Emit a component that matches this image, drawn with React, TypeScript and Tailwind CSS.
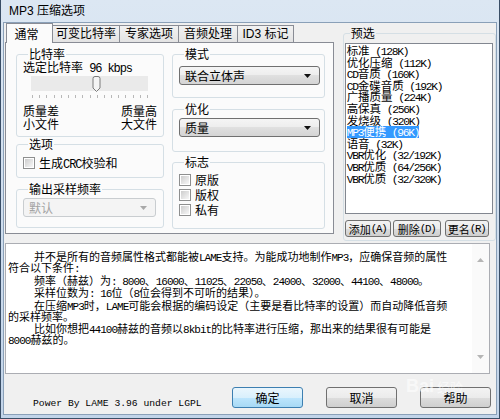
import type { ReactNode } from 'react';

const LATIN = /^[\x20-\x7e]+$/;

// SimSun-like mixing: CJK in Noto, latin runs in a narrow mono
function Mixed({ text, small = false }: { text: string; small?: boolean }) {
  const parts = text.split(/([\x20-\x7e]+)/).filter((p) => p !== '');
  return (
    <>
      {parts.map((p, i) =>
        LATIN.test(p) ? (
          <span
            key={i}
            className={
              small
                ? "whitespace-pre font-['Liberation_Mono',monospace] text-[0.98em] tracking-[-0.11em]"
                : "whitespace-pre font-['Liberation_Mono',monospace] text-[1em] tracking-[-0.09em]"
            }
          >
            {p}
          </span>
        ) : (
          <span key={i}>{p}</span>
        ),
      )}
    </>
  );
}

function Group({ title, className, children }: { title: string; className: string; children?: ReactNode }) {
  return (
    <fieldset className={`rounded-[3px] border border-[#d5dfe5] ${className}`}>
      <legend className="ml-[5px] px-[1px] text-[12px] leading-[12px]">{title}</legend>
      {children}
    </fieldset>
  );
}

function Combo({ text, disabled = false }: { text: string; disabled?: boolean }) {
  return (
    <div
      className={
        disabled
          ? 'flex h-[19px] items-center rounded-[3px] border border-[#c9cdd0] bg-[#f4f4f4] pl-[5px] pr-[8px] text-[#a3a3a3]'
          : 'flex h-[19px] items-center rounded-[3px] border border-[#707070] bg-[linear-gradient(to_bottom,#f5f5f5_0%,#ededed_50%,#e0e0e0_50%,#d4d4d4_100%)] pl-[5px] pr-[8px]'
      }
    >
      <span className="flex-1 text-[12px] leading-none">{text}</span>
      <svg width="7" height="4" viewBox="0 0 7 4">
        <path d="M0 0h7L3.5 4z" fill={disabled ? '#a8a8a8' : '#111'} />
      </svg>
    </div>
  );
}

function Check({ label }: { label: string }) {
  return (
    <div className="flex h-[15px] items-center gap-[4px]">
      <span className="h-[12px] w-[12px] border border-[#8e8f8f] bg-white p-[1px]">
        <span className="block h-full w-full bg-[linear-gradient(135deg,#cdcdcd,#f7f7f7)]" />
      </span>
      <span className="h-[13px] text-[12px] leading-[13px]">
        <Mixed text={label} />
      </span>
    </div>
  );
}

function Btn({ children, className }: { children: ReactNode; className: string }) {
  return (
    <div
      className={`flex items-center justify-center rounded-[3px] border border-[#707070] bg-[linear-gradient(to_bottom,#f3f3f3_0%,#ebebeb_50%,#dddddd_50%,#cfcfcf_100%)] ${className}`}
    >
      {children}
    </div>
  );
}

const presets = [
  '标准 (128K)',
  '优化压缩 (112K)',
  'CD音质 (160K)',
  'CD金碟音质 (192K)',
  '广播质量 (224K)',
  '高保真 (256K)',
  '发烧级 (320K)',
  'MP3便携 (96K)',
  '语音 (32K)',
  'VBR优化 (32/192K)',
  'VBR优质 (64/256K)',
  'VBR优质 (32/320K)',
];

const tabs = [
  { label: '可变比特率', w: 'w-[68px]' },
  { label: '专家选项', w: 'w-[60px]' },
  { label: '音频处理', w: 'w-[60px]' },
  { label: 'ID3 标记', w: 'w-[57px]' },
];

const notes: { first: string; rest?: string }[] = [
  { first: '并不是所有的音频属性格式都能被LAME支持。为能成功地制作MP3，应确保音频的属性', rest: '符合以下条件:' },
  { first: '频率（赫兹）为: 8000、16000、11025、22050、24000、32000、44100、48000。' },
  { first: '采样位数为: 16位（8位会得到不可听的结果）。' },
  { first: '在压缩MP3时，LAME可能会根据的编码设定（主要是看比特率的设置）而自动降低音频', rest: '的采样频率。' },
  { first: '比如你想把44100赫兹的音频以8kbit的比特率进行压缩，那出来的结果很有可能是', rest: '8000赫兹的。' },
];

export default function App() {
  return (
    <div className="flex h-[419px] w-[500px] flex-col border border-t-0 border-[#3a4e66] bg-[linear-gradient(to_bottom,#dce7f3,#c2d4e9)] px-[2px] pb-[3px] font-['Noto_Sans_CJK_SC',sans-serif] text-black">
      {/* title bar */}
      <div className="flex h-[22px] items-center pl-[6px] font-['Liberation_Sans','Noto_Sans_CJK_SC',sans-serif] text-[12px]">
        MP3 压缩选项
      </div>

      {/* client area */}
      <div className="flex flex-1 flex-col border border-[#8aa0b8] bg-[#f0f0f0]">
        <div className="flex h-[220px]">
          {/* tab control */}
          <div className="ml-[1px] w-[330px]">
            <div className="flex h-[19px] items-end pl-[1px] text-[12px]">
              <div className="relative z-10 -mb-px flex h-[20px] w-[47px] items-center justify-center border border-b-0 border-[#898c95] bg-[#fbfbfb] pr-[6px]">
                通常
              </div>
              {tabs.map((t) => (
                <div
                  key={t.label}
                  className={`-ml-px flex h-[17px] ${t.w} items-center justify-center border border-b-0 border-[#898c95] bg-[linear-gradient(to_bottom,#f2f2f2,#e3e3e3)] font-['Liberation_Sans','Noto_Sans_CJK_SC',sans-serif]`}
                >
                  {t.label}
                </div>
              ))}
            </div>
            <div className="flex h-[192px] border border-[#898c95] bg-[#fbfbfb] pl-[10px]">
              {/* left column */}
              <div className="flex w-[148px] flex-col">
                <Group title="比特率" className="mt-[5px] h-[89px] px-[6px]">
                  <div className="h-[13px] text-[12px] leading-[13px]">
                    <Mixed text="选定比特率 96 kbps" />
                  </div>
                  <div className="ml-[8px] mt-[3px] flex h-[15px] w-[117px] items-center bg-[#eaeaea]">
                    <div className="relative h-[4px] w-full">
                      <div className="absolute left-[61px] top-[-6px]">
                        <svg width="9" height="16" viewBox="0 0 9 16">
                          <path d="M1 2.5Q1 0.5 3 0.5h3q2 0 2 2V12l-3.5 3.5L1 12z" fill="#f4f4f4" stroke="#7a7a7a" />
                        </svg>
                      </div>
                    </div>
                  </div>
                  <div className="ml-[9px] mt-[4px] flex w-[116px] justify-between">
                    {Array.from({ length: 17 }).map((_, i) => (
                      <span key={i} className="h-[3px] w-px bg-[#b8b8b8]" />
                    ))}
                  </div>
                  <div className="mt-[6px] flex justify-between text-[12px] leading-[13px]">
                    <div>
                      <div className="h-[13px]">质量差</div>
                      <div className="h-[13px]">小文件</div>
                    </div>
                    <div className="text-right">
                      <div className="h-[13px]">质量高</div>
                      <div className="h-[13px]">大文件</div>
                    </div>
                  </div>
                </Group>
                <Group title="选项" className="mt-[1px] h-[40px] px-[6px]">
                  <div className="mt-[5px]">
                    <Check label="生成CRC校验和" />
                  </div>
                </Group>
                <Group title="输出采样频率" className="mt-[5px] h-[45px] pl-[6px] pr-[7px]">
                  <div className="mt-[3px]">
                    <Combo text="默认" disabled />
                  </div>
                </Group>
              </div>

              {/* right column */}
              <div className="ml-[8px] flex w-[153px] flex-col">
                <Group title="模式" className="mt-[5px] h-[50px] pl-[6px] pr-[4px]">
                  <div className="mt-[6px]">
                    <Combo text="联合立体声" />
                  </div>
                </Group>
                <Group title="优化" className="mt-[5px] h-[49px] pl-[6px] pr-[4px]">
                  <div className="mt-[3px]">
                    <Combo text="质量" />
                  </div>
                </Group>
                <Group title="标志" className="mt-[4px] h-[73px] pl-[6px]">
                  <div className="mt-[4px] flex flex-col">
                    <Check label="原版" />
                    <Check label="版权" />
                    <Check label="私有" />
                  </div>
                </Group>
              </div>
            </div>
          </div>

          {/* presets */}
          <Group title="预选" className="ml-[9px] mt-[4px] flex h-[214px] w-[154px] flex-col pl-px pr-[2px]">
            <div className="mt-[4px] h-[171px] border border-[#828790] bg-white pl-px pt-px text-[11.5px] leading-[11.6px]">
              {presets.map((p) => (
                <div key={p} className="h-[11.6px] whitespace-nowrap">
                  <span className={p.startsWith('MP3') ? 'inline-block h-[11.6px] bg-[#3399ff] text-white' : ''}>
                    <Mixed text={p} small />
                  </span>
                </div>
              ))}
            </div>
            <div className="mt-[6px] flex text-[11px] leading-[12px]">
              <Btn className="h-[17px] w-[46px]">
                <Mixed text="添加(A)" small />
              </Btn>
              <Btn className="ml-[2px] h-[17px] w-[48px]">
                <Mixed text="删除(D)" small />
              </Btn>
              <Btn className="ml-[4px] h-[17px] w-[44px]">
                <Mixed text="更名(R)" small />
              </Btn>
            </div>
          </Group>
        </div>

        {/* notes */}
        <div className="ml-[1px] flex h-[131px] w-[485px] border border-[#abadb3] bg-white">
          <div className="flex-1 pl-[2px] pt-[7px] text-[11px] leading-[11px]">
            {notes.map((n, i) => (
              <div key={i} className={i === 0 ? 'whitespace-nowrap' : 'mt-[1.5px] whitespace-nowrap'}>
                <div className="h-[11px] pl-[26px]">
                  <Mixed text={n.first} />
                </div>
                {n.rest && (
                  <div className="h-[11px]">
                    <Mixed text={n.rest} />
                  </div>
                )}
              </div>
            ))}
          </div>
          <div className="flex w-[17px] flex-col items-center justify-between bg-[#fafafa] py-[14px]">
            <svg width="7" height="4" viewBox="0 0 7 4">
              <path d="M0 4h7L3.5 0z" fill="#b5b5b5" />
            </svg>
            <svg width="7" height="4" viewBox="0 0 7 4">
              <path d="M0 0h7L3.5 4z" fill="#b5b5b5" />
            </svg>
          </div>
        </div>

        {/* bottom bar */}
        <div className="relative flex flex-1 items-start">
          <div className="ml-[29px] mt-[24px] font-['Liberation_Mono',monospace] text-[9.7px] leading-[12px]">
            Power By LAME 3.96 under LGPL
          </div>
          <div className="ml-auto mr-[5px] mt-[13px] flex gap-[23px] text-[12px]">
            <div className="flex h-[21px] w-[71px] items-center justify-center rounded-[3px] border border-[#3c7fb1] bg-[linear-gradient(to_bottom,#eaf6fd_0%,#d9f0fc_50%,#bee6fd_50%,#a7d9f5_100%)]">
              确定
            </div>
            <Btn className="h-[21px] w-[71px]">取消</Btn>
            <Btn className="h-[21px] w-[71px]">帮助</Btn>
          </div>
          {/* watermark */}
          <div className="pointer-events-none absolute left-[402px] top-[3px] flex items-center gap-[3px] font-['Liberation_Sans',sans-serif] text-[18px] font-bold leading-none text-white/60">
            Bai
            <span className="font-['Noto_Sans_CJK_SC',sans-serif] text-[13px] font-normal">经验</span>
          </div>
        </div>
      </div>
    </div>
  );
}
